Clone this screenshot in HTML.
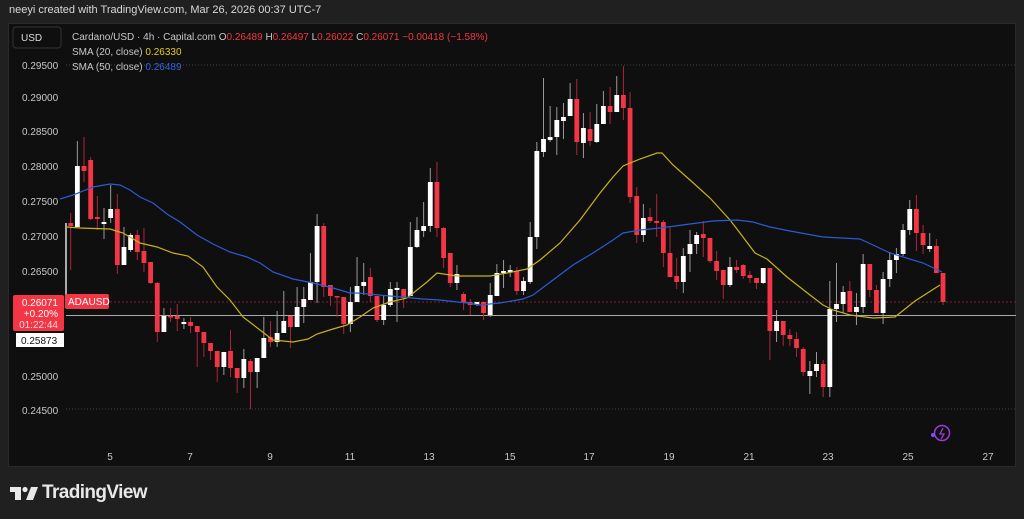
<!DOCTYPE html>
<html><head><meta charset="utf-8"><style>
html,body{margin:0;padding:0;background:#202020;width:1024px;height:519px;overflow:hidden;font-family:"Liberation Sans",sans-serif}
.hdr{position:absolute;left:9px;top:4px;color:#d8d8d8;font-size:11px}
.panel{position:absolute;left:8px;top:23px;width:1008px;height:444px;background:#0f0f0f;border:1px solid #2a2a2a;box-sizing:border-box}
svg{position:absolute;left:0;top:0}
.logo{position:absolute;left:42px;top:482px;color:#e8e8e8;font-size:19px;font-weight:bold;letter-spacing:-0.6px}
</style></head><body>
<div class="hdr">neeyi created with TradingView.com, Mar 26, 2026 00:37 UTC-7</div>
<div class="panel"></div>
<svg id="s" width="1024" height="519" xmlns="http://www.w3.org/2000/svg" font-family="Liberation Sans, sans-serif">
<line x1="66" y1="65" x2="1016" y2="65" stroke="#444" stroke-dasharray="1,2"/>
<line x1="66" y1="409" x2="1016" y2="409" stroke="#444" stroke-dasharray="1,2"/>
<line x1="66" y1="302" x2="1016" y2="302" stroke="#7a2028" stroke-dasharray="2,2"/>
<line x1="66" y1="315.5" x2="1016" y2="315.5" stroke="#aaa" stroke-width="1"/>
<line x1="66" y1="223" x2="66" y2="300" stroke="#ddd" stroke-width="1.5"/>
<g id="c"></g>
<polyline fill="none" stroke="#c9b21c" stroke-width="1.2" points="67,227 80,228 110,229 123,233 140,243 157,247 173,253 188,256 203,267 217,287 230,300 243,317 260,330 273,340 293,342 308,339 317,334 333,329 347,325 360,317 373,308 390,302 407,298 427,282 437,273 457,276 490,276 507,273 527,269 540,260 560,243 580,220 600,193 613,177 623,166 640,159 657,153 662,153 673,165 690,180 710,198 730,220 740,233 755,253 767,259 787,277 810,295 823,305 833,310 850,315 873,318 895,317 915,301 940,285"/>
<polyline fill="none" stroke="#2a5bd7" stroke-width="1.2" points="60,199 73,195 93,187 110,184 120,185 130,190 140,197 153,203 167,214 180,222 197,235 213,244 230,252 247,257 260,263 273,272 293,279 313,283 333,288 350,293 357,293 390,296 423,299 440,300 467,303 480,305 500,303 523,299 533,295 553,280 573,265 593,253 613,240 623,233 640,230 660,228 690,224 713,221 737,220 753,222 770,227 790,231 823,237 860,239 873,245 890,253 923,263 942,272"/>
<g font-size="10" fill="#c8c8c8">
<text x="22" y="69">0.29500</text><text x="22" y="101">0.29000</text><text x="22" y="135">0.28500</text><text x="22" y="170">0.28000</text><text x="22" y="205">0.27500</text><text x="22" y="240">0.27000</text><text x="22" y="275">0.26500</text><text x="22" y="380">0.25000</text><text x="22" y="414">0.24500</text>
</g>
<g font-size="10" fill="#c8c8c8" text-anchor="middle">
<text x="110" y="460">5</text><text x="190" y="460">7</text><text x="270" y="460">9</text><text x="350" y="460">11</text><text x="429" y="460">13</text><text x="510" y="460">15</text><text x="589" y="460">17</text><text x="669" y="460">19</text><text x="749" y="460">21</text><text x="828" y="460">23</text><text x="908" y="460">25</text><text x="988" y="460">27</text>
</g>
<rect x="13" y="27" width="48" height="21" rx="3" fill="#0f0f0f" stroke="#333"/>
<text x="21" y="41" font-size="10" fill="#ddd">USD</text>
<g font-size="10">
<text x="72" y="40" fill="#c8c8c8">Cardano/USD · 4h · Capital.com  O<tspan fill="#f23645">0.26489</tspan>  H<tspan fill="#f23645">0.26497</tspan>  L<tspan fill="#f23645">0.26022</tspan>  C<tspan fill="#f23645">0.26071  −0.00418 (−1.58%)</tspan></text>
<text x="72" y="55" fill="#c8c8c8">SMA (20, close)  <tspan fill="#e5cc1a">0.26330</tspan></text>
<text x="72" y="70" fill="#c8c8c8">SMA (50, close)  <tspan fill="#2f62e0">0.26489</tspan></text>
</g>
<rect x="13" y="295" width="51" height="36" rx="2" fill="#f23645"/>
<g font-size="10" fill="#fff" text-anchor="end"><text x="58" y="306">0.26071</text><text x="58" y="317">+0.20%</text><text x="58" y="328" fill="#ffd6da">01:22:44</text></g>
<rect x="16" y="333" width="48" height="14" fill="#fff"/>
<text x="21" y="344" font-size="10" fill="#111">0.25873</text>
<rect x="65" y="294" width="44" height="15" rx="2" fill="#f23645"/>
<text x="68" y="305" font-size="10" fill="#fff">ADAUSD</text>
<circle cx="942" cy="433" r="7.5" fill="none" stroke="#9c3bd6" stroke-width="1.5"/>
<path d="M943 428 L940 434 L944 434 L941 439" fill="none" stroke="#9c3bd6" stroke-width="1.3"/>
<circle cx="933" cy="435" r="2" fill="#7b4dff"/>
<g fill="#e8e8e8">
<rect x="10" y="487" width="11" height="5"/><rect x="15" y="487" width="6" height="13"/>
<circle cx="25" cy="489.5" r="2.6"/>
<path d="M31 487 L38 487 L33 500 L26 500 Z"/>
</g>
</svg>
<div class="logo">TradingView</div>
<script>
var d=[[223,226,213,270,0],[166,227,141,227,1],[166,171,137,182,0],[160,219,157,220,0],[217,219,196,230,0],[222,224,208,239,1],[209,218,185,223,1],[209,265,194,274,0],[247,265,227,265,1],[235,250,233,252,1],[235,252,230,260,0],[251,263,228,272,0],[262,283,262,284,0],[283,332,282,342,0],[316,332,308,332,1],[316,317,308,322,0],[316,319,304,331,0],[322,324,318,329,1],[322,326,317,333,0],[326,332,326,367,0],[332,343,332,357,0],[343,351,343,360,0],[351,367,351,382,0],[352,367,352,375,1],[351,368,330,377,0],[368,378,368,393,0],[359,378,349,388,1],[361,372,359,409,0],[358,372,358,388,1],[338,358,317,358,1],[337,342,321,347,0],[333,342,311,347,1],[321,333,291,333,1],[316,327,316,348,0],[307,327,287,327,1],[299,307,287,323,1],[282,300,253,300,1],[226,282,214,303,1],[226,287,223,297,0],[285,296,285,306,0],[296,297,296,317,0],[297,324,297,334,0],[302,324,287,332,1],[286,302,257,302,1],[282,286,263,295,1],[277,296,268,302,0],[296,320,296,322,0],[305,320,295,325,1],[289,305,282,307,1],[288,290,282,322,1],[289,298,289,308,0],[247,296,222,296,1],[230,247,217,248,1],[226,231,202,237,1],[182,226,168,232,1],[182,228,162,237,0],[228,258,227,268,0],[253,283,253,287,0],[274,283,265,290,1],[294,303,292,310,0],[302,305,299,315,0],[302,305,302,306,1],[302,313,302,320,0],[295,315,283,317,1],[273,296,264,296,1],[271,273,260,288,1],[270,272,265,277,1],[271,291,267,295,0],[281,291,277,295,1],[237,282,222,284,1],[151,237,142,249,1],[139,152,78,157,1],[137,140,106,142,1],[120,137,107,155,1],[117,121,103,139,1],[99,116,83,116,1],[99,142,79,155,0],[128,143,113,158,1],[129,141,112,146,0],[124,142,104,143,1],[106,124,91,124,1],[106,112,87,124,0],[95,112,76,112,1],[95,108,66,120,0],[108,197,92,203,0],[196,235,187,243,0],[218,235,204,242,1],[217,221,208,223,0],[221,223,194,237,0],[222,253,220,267,0],[253,277,227,277,0],[276,282,258,289,0],[256,282,248,293,1],[244,254,230,272,1],[235,244,232,254,1],[234,238,221,257,0],[238,261,238,263,0],[261,271,251,280,0],[270,285,270,299,0],[267,285,257,287,1],[267,270,260,273,0],[265,276,264,279,0],[275,278,271,283,0],[278,283,278,289,0],[268,283,268,284,1],[268,331,268,360,0],[321,331,310,342,1],[321,335,321,346,0],[335,339,329,346,0],[339,348,332,357,0],[349,372,347,376,0],[371,376,361,394,1],[364,371,352,377,1],[364,387,360,397,0],[309,387,281,397,1],[304,309,263,322,1],[292,304,286,313,1],[291,312,281,312,0],[307,312,293,325,1],[264,307,254,313,1],[264,290,264,297,0],[290,313,285,313,0],[279,313,272,324,1],[260,279,252,287,1],[254,260,248,273,1],[230,254,224,256,1],[209,230,200,235,1],[209,233,195,251,0],[233,245,225,254,0],[246,249,233,252,1],[246,273,239,273,0],[273,302,273,305,0]];
var g=document.getElementById('c'),h='';
for(var i=0;i<d.length;i++){var x=70.7+i*6.659,c=d[i],col=c[4]?'#ffffff':'#f23645',wc=c[4]?'#9a9a9a':'#a8283a';
h+='<line x1="'+x+'" y1="'+c[2]+'" x2="'+x+'" y2="'+c[3]+'" stroke="'+wc+'" stroke-width="1"/>';
var hh=Math.max(1.5,c[1]-c[0]);h+='<rect x="'+(x-2.4)+'" y="'+c[0]+'" width="4.8" height="'+hh+'" fill="'+col+'"/>';}
g.innerHTML=h;
</script>
</body></html>
